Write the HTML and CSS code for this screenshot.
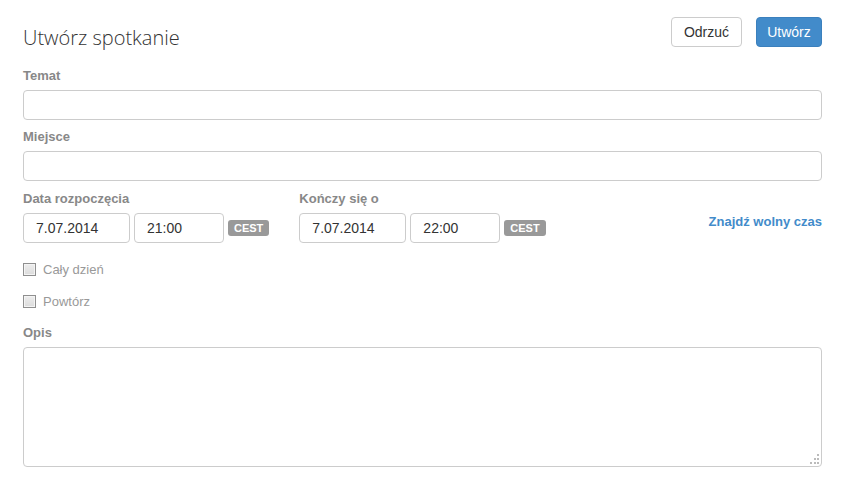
FILE: index.html
```html
<!DOCTYPE html>
<html lang="pl">
  <head>
    <meta charset="UTF-8" />
    <title>Utwórz spotkanie</title>
    <link rel="stylesheet" href="styles.css">
  </head>
  <body>
    <div class="page">
      <div class="header">
        <h1>Utwórz spotkanie</h1>
        <div class="actions">
          <button class="btn btn-cancel">Odrzuć</button>
          <button class="btn btn-primary">Utwórz</button>
        </div>
      </div>

      <div class="field">
        <label>Temat</label>
        <input type="text" class="input" />
      </div>

      <div class="field">
        <label>Miejsce</label>
        <input type="text" class="input" />
      </div>

      <div class="date-row">
        <div class="date-group">
          <label>Data rozpoczęcia</label>
          <div class="date-inputs">
            <input type="text" class="input date" value="7.07.2014" />
            <input type="text" class="input time" value="21:00" />
            <span class="badge">CEST</span>
          </div>
        </div>
        <div class="date-group">
          <label>Kończy się o</label>
          <div class="date-inputs">
            <input type="text" class="input date" value="7.07.2014" />
            <input type="text" class="input time" value="22:00" />
            <span class="badge">CEST</span>
          </div>
        </div>
        <a class="free-time" href="#">Znajdź wolny czas</a>
      </div>

      <label class="check"><input type="checkbox" /> Cały dzień</label>
      <label class="check"><input type="checkbox" /> Powtórz</label>

      <div class="field description">
        <label>Opis</label>
        <div class="textarea-wrap">
          <textarea class="input"></textarea>
          <svg class="grip" width="10" height="10" viewBox="0 0 10 10">
            <rect x="8" y="0" width="2" height="2" />
            <rect x="5" y="4" width="2" height="2" />
            <rect x="8" y="4" width="2" height="2" />
            <rect x="1" y="8" width="2" height="2" />
            <rect x="5" y="8" width="2" height="2" />
            <rect x="8" y="8" width="2" height="2" />
          </svg>
        </div>
      </div>
    </div>
  </body>
</html>
```

FILE: styles.css
```css
body {
  margin: 0;
  background: white;
  font-family: "Liberation Sans", Arial, sans-serif;
  color: #333;
}
.page {
  padding: 17px 21px 0 23px;
}
.header {
  display: flex;
  justify-content: space-between;
  align-items: flex-start;
  height: 50px;
}
h1 {
  margin: 7px 0 0 0;
  font-family: "Open Sans", sans-serif;
  font-weight: 300;
  font-size: 20px;
  color: #333;
}
.actions {
  display: flex;
  gap: 14px;
}
.btn {
  height: 30px;
  padding: 0;
  font-family: "Liberation Sans", Arial, sans-serif;
  font-size: 14px;
  color: #333;
  background: white;
  border: 1px solid #ccc;
  border-radius: 4px;
}
.btn-cancel {
  width: 71px;
}
.btn-primary {
  width: 66px;
  background: #428bca;
  border-color: #3b80bd;
  color: white;
}
.field label,
.date-group label {
  display: block;
  font-size: 13px;
  font-weight: bold;
  line-height: 18px;
  color: #888;
  margin-bottom: 5px;
}
.field {
  margin-bottom: 8px;
}
.input {
  display: block;
  width: 100%;
  height: 30px;
  box-sizing: border-box;
  padding: 0 12px;
  border: 1px solid #ccc;
  border-radius: 4px;
  font-family: "Liberation Sans", Arial, sans-serif;
  font-size: 14px;
  color: #333;
  outline: none;
}
.date-row {
  display: flex;
  align-items: flex-end;
  gap: 30px;
  margin-top: 9px;
}
.date-inputs {
  display: flex;
  align-items: center;
  gap: 4px;
}
.input.date {
  width: 107px;
}
.input.time {
  width: 90px;
}
.badge {
  background: #999;
  color: white;
  font-size: 11px;
  font-weight: bold;
  line-height: 16px;
  padding: 0 6px;
  border-radius: 3px;
  margin-top: -1px;
}
.free-time {
  margin-left: auto;
  margin-bottom: 14px;
  color: #428bca;
  font-size: 13px;
  font-weight: bold;
  text-decoration: none;
}
.check {
  display: flex;
  align-items: center;
  gap: 7px;
  font-size: 13px;
  color: #999;
  height: 32px;
}
.check:first-of-type {
  margin-top: 10px;
}
.check input {
  appearance: none;
  margin: 0;
  width: 13px;
  height: 13px;
  border: 1px solid #8f8f8f;
  background: linear-gradient(#ededed, #dcdcdc);
  box-shadow: inset 0 0 0 1px #f4f4f4;
}
.description {
  margin-top: 7px;
}
.textarea-wrap {
  position: relative;
}
textarea.input {
  height: 120px;
  resize: none;
  padding: 6px 12px;
}
.grip {
  position: absolute;
  right: 3px;
  bottom: 3px;
  fill: #bbb;
}
```
